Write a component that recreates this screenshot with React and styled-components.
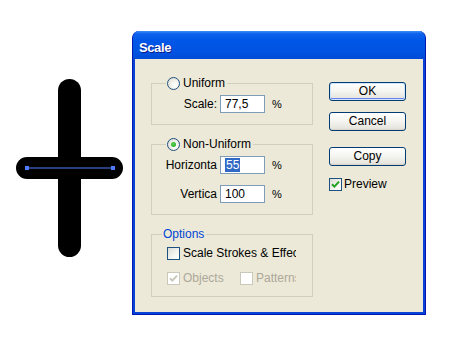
import React from 'react';
import styled, { createGlobalStyle } from 'styled-components';

const GlobalStyle = createGlobalStyle`
  html, body {
    margin: 0;
    padding: 0;
    background: #fff;
  }

  body {
    font-family: "Liberation Sans", Arial, sans-serif;
    font-size: 12px;
    color: #000;
  }
`;

export default function App () {
  return (
    <>
      <GlobalStyle />
      <Page>
        <CrossArt />
        <Dialog>
          <TitleBar>
            <Title>Scale</Title>
          </TitleBar>
          <Body>
            <Groups>
              <Group>
                <Legend>
                  <Radio />
                  <span>Uniform</span>
                </Legend>
                <Rows>
                  <FieldRow>
                    <Label>Scale:</Label>
                    <Input>77,5</Input>
                    <Unit>%</Unit>
                  </FieldRow>
                </Rows>
              </Group>

              <Group>
                <Legend>
                  <Radio checked />
                  <span>Non-Uniform</span>
                </Legend>
                <Rows>
                  <FieldRow>
                    <Label>Horizonta</Label>
                    <Input><Selected>55</Selected></Input>
                    <Unit>%</Unit>
                  </FieldRow>
                  <FieldRow>
                    <Label>Vertica</Label>
                    <Input>100</Input>
                    <Unit>%</Unit>
                  </FieldRow>
                </Rows>
              </Group>

              <Group>
                <Legend blue>Options</Legend>
                <Checks>
                  <CheckRow>
                    <Check />
                    <span>Scale Strokes &amp; Effects</span>
                  </CheckRow>
                  <CheckRow>
                    <CheckItem disabled>
                      <Check checked disabled />
                      <span>Objects</span>
                    </CheckItem>
                    <CheckItem disabled>
                      <Check disabled />
                      <span>Patterns</span>
                    </CheckItem>
                  </CheckRow>
                </Checks>
              </Group>
            </Groups>

            <Actions>
              <Button isDefault>OK</Button>
              <Button>Cancel</Button>
              <Button spaced>Copy</Button>
              <PreviewRow>
                <Check checked />
                <span>Preview</span>
              </PreviewRow>
            </Actions>
          </Body>
        </Dialog>
      </Page>
    </>
  );
}

function CrossArt () {
  return (
    <Art width="132" height="347" viewBox="0 0 132 347">
      <line x1="69.5" y1="90.5" x2="69.5" y2="245.5" stroke="#000" strokeWidth="23" strokeLinecap="round" />
      <line x1="27" y1="168" x2="112" y2="168" stroke="#000" strokeWidth="22" strokeLinecap="round" />
      <line x1="27" y1="168" x2="113" y2="168" stroke="#4f7cff" strokeWidth="1" />
      <rect x="25" y="166" width="4" height="4" fill="#4f7cff" />
      <rect x="111" y="166" width="4" height="4" fill="#4f7cff" />
    </Art>
  );
}

function Radio ({ checked }) {
  return (
    <RadioBox>
      {checked && <Dot />}
    </RadioBox>
  );
}

function Check ({ checked, disabled }) {
  return (
    <CheckBox disabled={disabled}>
      {checked && (
        <svg width="9" height="9" viewBox="0 0 9 9">
          <path d="M1 4.2 L3.4 6.6 L8 1.6" fill="none" stroke={disabled ? '#cac8bb' : '#21a121'} strokeWidth="2" />
        </svg>
      )}
    </CheckBox>
  );
}

const Page = styled.div`
  display: flex;
  align-items: flex-start;
  width: 449px;
  height: 347px;
  overflow: hidden;
`;

const Art = styled.svg`
  display: block;
  flex: none;
`;

const Dialog = styled.div`
  margin-top: 31px;
  width: 294px;
  height: 284px;
  box-sizing: border-box;
  display: flex;
  flex-direction: column;
  background: #0842d6;
  border: 1px solid #0019b0;
  border-top: none;
  border-radius: 7px 7px 0 0;
  overflow: hidden;
`;

const TitleBar = styled.div`
  height: 28px;
  flex: none;
  display: flex;
  align-items: center;
  padding: 4px 0 0 6px;
  box-sizing: border-box;
  background: linear-gradient(180deg, #3d8ef8 0%, #0d62ec 10%, #0056e6 35%, #0054e4 70%, #004bd6 100%);
`;

const Title = styled.div`
  color: #fff;
  font-family: "Liberation Sans", Arial, sans-serif;
  font-weight: bold;
  font-size: 13px;
  letter-spacing: -0.4px;
  text-shadow: 1px 1px 0 #0a1a8a;
`;

const Body = styled.div`
  flex: 1;
  margin: 0 2px 2px;
  background: #ece9d8;
  display: flex;
  padding: 17px 0 0 16px;
  gap: 16px;
`;

const Groups = styled.div`
  width: 162px;
  display: flex;
  flex-direction: column;
  gap: 12px;
`;

const Group = styled.fieldset`
  margin: 0;
  padding: 0;
  min-width: 0;
  border: 1px solid #d0d0bf;
`;

const Legend = styled.legend`
  margin-left: ${props => props.blue ? '10px' : '14px'};
  padding: 0 2px 0 1px;
  height: 14px;
  display: flex;
  align-items: center;
  gap: 3px;
  line-height: 14px;
  color: ${props => props.blue ? '#0046d5' : '#000'};
`;

const RadioBox = styled.span`
  width: 13px;
  height: 13px;
  box-sizing: border-box;
  border-radius: 50%;
  border: 1px solid #1c5180;
  background: radial-gradient(circle at 65% 65%, #fff 0%, #f2f1ea 45%, #d6d4c8 100%);
  display: flex;
  align-items: center;
  justify-content: center;
`;

const Dot = styled.span`
  width: 5px;
  height: 5px;
  border-radius: 50%;
  background: radial-gradient(circle at 40% 40%, #55d551, #21a121);
`;

const Rows = styled.div`
  display: flex;
  flex-direction: column;
  gap: 11px;
  padding: 5px 0 11px;
`;

const FieldRow = styled.div`
  display: grid;
  grid-template-columns: 65px 48px auto;
  align-items: center;
`;

const Label = styled.span`
  text-align: right;
`;

const Input = styled.div`
  margin-left: 3px;
  height: 18px;
  box-sizing: border-box;
  border: 1px solid #7f9db9;
  background: #fff;
  padding: 0 4px;
  line-height: 16px;
`;

const Selected = styled.span`
  background: #316ac5;
  color: #fff;
  padding: 0 1px;
`;

const Unit = styled.span`
  margin-left: 7px;
  font-size: 11px;
`;

const Checks = styled.div`
  display: flex;
  flex-direction: column;
  gap: 11px;
  padding: 5px 16px 11px 15px;
`;

const CheckRow = styled.div`
  display: flex;
  align-items: center;
  gap: 3px;
  height: 14px;
  white-space: nowrap;
  overflow: hidden;
`;

const CheckItem = styled.div`
  display: flex;
  align-items: center;
  gap: 3px;
  width: 70px;
  flex: none;
  color: ${props => props.disabled ? '#aca899' : '#000'};

  &:last-child {
    width: auto;
  }
`;

const CheckBox = styled.span`
  flex: none;
  width: 13px;
  height: 13px;
  box-sizing: border-box;
  border: 1px solid ${props => props.disabled ? '#cac8bb' : '#1c5180'};
  background: ${props => props.disabled ? '#fff' : 'linear-gradient(135deg, #dcdcd7 0%, #f4f4f0 60%, #fff 100%)'};
  display: flex;
  align-items: center;
  justify-content: center;
`;

const Actions = styled.div`
  width: 77px;
  display: flex;
  flex-direction: column;
  padding-top: 6px;
`;

const Button = styled.div`
  height: 19px;
  box-sizing: border-box;
  margin-top: ${props => props.spaced ? '16px' : '11px'};
  border: 1px solid #003c74;
  border-radius: 3px;
  background: linear-gradient(180deg, #fff 0%, #f4f4f0 50%, #e6e5de 90%, #d6d0c5 100%);
  box-shadow: ${props => props.isDefault ? 'inset 0 0 0 1px #cee7ff, inset 0 -1px 0 1px #6982ee' : 'none'};
  display: flex;
  align-items: center;
  justify-content: center;
  line-height: 17px;

  &:first-child {
    margin-top: 0;
  }
`;

const PreviewRow = styled.div`
  margin-top: 11px;
  display: flex;
  align-items: center;
  gap: 2px;
  height: 14px;
`;
